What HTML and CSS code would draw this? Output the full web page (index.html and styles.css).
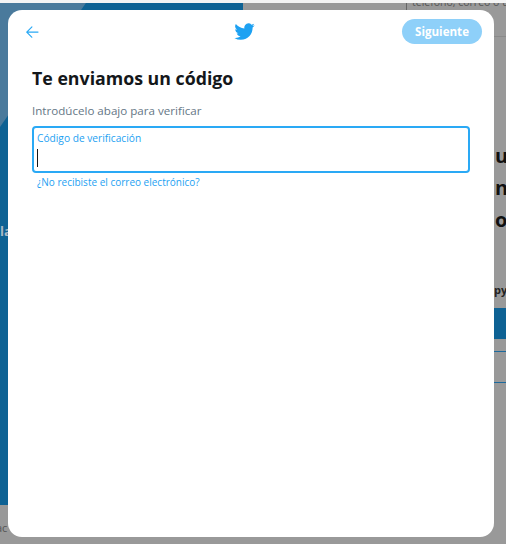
FILE: index.html
```html
<!DOCTYPE html>
<html lang="es">
<head>
<meta charset="utf-8">
<title>Te enviamos un código</title>
<link rel="stylesheet" href="styles.css">
</head>
<body>
<div class="backdrop" aria-hidden="true">
  <div class="bg-left"></div>
  <div class="bg-top-blue"></div>
  <div class="bg-top-left"></div>
  <div class="bg-left-text">la</div>
  <div class="bg-bottom-text">ac</div>
  <div class="bg-divider"></div>
  <div class="bg-field-text">teléfono, correo o us</div>
  <div class="bg-rule"></div>
  <div class="bg-heading">u<br>n<br>o</div>
  <div class="bg-py">py</div>
  <div class="bg-button"></div>
  <div class="bg-line-a"></div>
  <div class="bg-line-b"></div>
</div>
<main class="dialog">
  <header class="dialog-head">
    <svg class="back" viewBox="0 0 24 24"><path d="M20 11.2H6.9l5.6-5.6a.8.8 0 0 0-1.1-1.1l-7 7a.8.8 0 0 0 0 1.1l7 7a.8.8 0 0 0 1.1-1.1l-5.6-5.6H20a.8.8 0 0 0 0-1.6z"/></svg>
    <svg class="bird" viewBox="0 0 24 24"><path d="M23.64 4.94c-.85.38-1.77.64-2.73.75.98-.59 1.73-1.52 2.09-2.62-.92.54-1.94.94-3.01 1.15A4.74 4.74 0 0 0 16.5 2.7a4.74 4.74 0 0 0-4.62 5.82A13.47 13.47 0 0 1 2.1 3.56a4.74 4.74 0 0 0 1.47 6.33c-.78-.02-1.51-.24-2.15-.59v.06c0 2.3 1.64 4.21 3.8 4.65-.4.11-.81.16-1.25.16-.3 0-.6-.03-.89-.08a4.75 4.75 0 0 0 4.43 3.29 9.5 9.5 0 0 1-7.02 1.96 13.42 13.42 0 0 0 7.27 2.13c8.72 0 13.49-7.23 13.49-13.49l-.02-.61c.93-.67 1.73-1.5 2.41-2.43z"/></svg>
    <button class="next" type="button">Siguiente</button>
  </header>
  <h1 class="title">Te enviamos un código</h1>
  <p class="subtitle">Introdúcelo abajo para verificar</p>
  <div class="field">
    <span class="field-label">Código de verificación</span>
    <span class="caret"></span>
  </div>
  <a class="help" href="#">¿No recibiste el correo electrónico?</a>
</main>
</body>
</html>
```
FILE: styles.css
```css
* { box-sizing: border-box; }
html, body { margin: 0; height: 100%; }
body {
  position: relative;
  overflow: hidden;
  background: #999999;
  font-family: "Open Sans", "Noto Sans", sans-serif;
  padding: 10px 12px 7px 8px;
  height: 544px;
}
.backdrop { position: absolute; inset: 0; overflow: hidden; }
.backdrop::before {
  content: ""; position: absolute; left: 0; top: 0; right: 0; height: 3px; background: #f4f4f4; z-index: 2;
}
.bg-top-left { position: absolute; left: 0; top: 0; width: 88px; height: 127px; background: #4a7a9c; clip-path: polygon(0 0, 100% 0, 0 100%); }
.bg-top-blue { position: absolute; left: 0; top: 0; width: 243px; height: 12px; background: #0e6294; }
.bg-left { position: absolute; left: 0; top: 0; width: 8px; height: 505px; background: #0e6294; }
.bg-left-text { position: absolute; left: -8px; top: 222px; font: 700 13px "Open Sans", sans-serif; color: #a8b8c4; padding-left: 8px; }
.bg-bottom-text { position: absolute; left: -4px; top: 520px; font: 400 11px "Open Sans", sans-serif; color: #555; }
.bg-divider { position: absolute; left: 406px; top: 3px; width: 1px; height: 9px; background: #666; }
.bg-field-text { position: absolute; left: 412px; top: -5px; font: 400 10.5px/14px "Open Sans", sans-serif; color: #555; white-space: nowrap; }
.bg-rule { position: absolute; left: 494px; top: 36px; right: 0; height: 1px; background: #8a8a8a; }
.bg-heading { position: absolute; left: 495px; top: 140px; font: 700 20px/32px "Open Sans", sans-serif; color: #111; }
.bg-py { position: absolute; left: 494px; top: 283px; font: 700 11px/14px "Open Sans", sans-serif; color: #222; }
.bg-button { position: absolute; left: 494px; top: 308px; right: 0; height: 31px; background: #0e6294; }
.bg-line-a { position: absolute; left: 494px; top: 351px; right: 0; height: 1px; background: #1d6a9c; }
.bg-line-b { position: absolute; left: 494px; top: 382px; right: 0; height: 1px; background: #1d6a9c; }

.dialog {
  position: relative;
  height: 527px;
  background: #fff;
  border-radius: 14px;
  padding: 9px 12px 0 24px;
}
.dialog-head { display: flex; align-items: center; justify-content: space-between; height: 25px; position: relative; }
.back { width: 18px; height: 18px; margin-left: -9px; fill: #2aa9f5; }
.bird { width: 21px; height: 21px; fill: #1da1f2; position: absolute; left: 202px; top: 2px; }
.next {
  width: 80px; height: 25px; border: 0; border-radius: 13px; padding: 0;
  background: #8ed0f9; color: #fff; font: 700 11.6px "Open Sans", sans-serif;
}
.title { margin: 22px 0 0; font: 700 17.75px/24px "Open Sans", sans-serif; color: #14171a; }
.subtitle { margin: 13px 0 0; font: 400 11.6px/16px "Open Sans", sans-serif; color: #657786; }
.field {
  margin: 7px 12px 0 0;
  height: 47px;
  border: 2px solid #2aa9f5;
  border-radius: 4px;
  padding: 3px 3px;
  display: flex; flex-direction: column; align-items: flex-start;
}
.field-label { font-size: 10.2px; line-height: 14px; color: #1da1f2; }
.caret { width: 1px; height: 18px; margin-top: 4px; background: #14171a; }
.help { display: block; margin: 2px 0 0 5px; font-size: 10px; line-height: 14px; color: #1da1f2; text-decoration: none; }
```
